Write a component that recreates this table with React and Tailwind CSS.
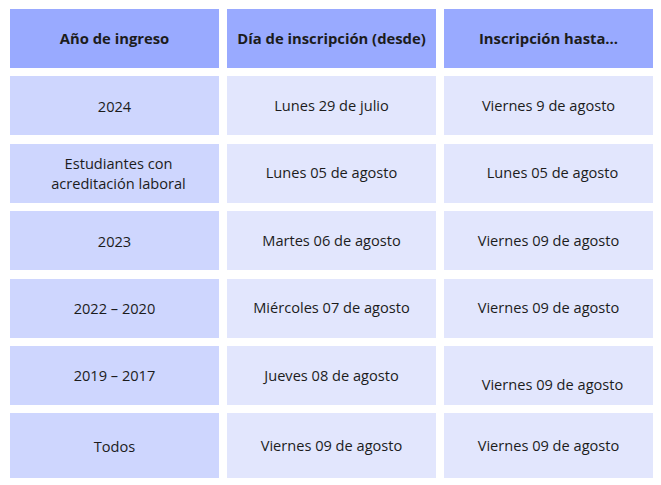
const rows = [
  { a: ['2024'], b: 'Lunes 29 de julio', c: 'Viernes 9 de agosto' },
  { a: ['Estudiantes con', 'acreditación laboral'], b: 'Lunes 05 de agosto', c: 'Lunes 05 de agosto', aShift: 'pl-2', cShift: 'pl-2' },
  { a: ['2023'], b: 'Martes 06 de agosto', c: 'Viernes 09 de agosto' },
  { a: ['2022 – 2020'], b: 'Miércoles 07 de agosto', c: 'Viernes 09 de agosto' },
  { a: ['2019 – 2017'], b: 'Jueves 08 de agosto', c: 'Viernes 09 de agosto', cShift: 'pl-2 pt-[19px]' },
  { a: ['Todos'], b: 'Viernes 09 de agosto', c: 'Viernes 09 de agosto' },
];

export default function App() {
  return (
    <div
      className="w-[661px] h-[485px] bg-white pl-[10px] pt-[9px] text-[#1c1c1c]"
      style={{ fontFamily: '"Open Sans", "Noto Sans", sans-serif' }}
    >
      <div className="grid grid-cols-[209px_209px_209px] gap-x-[8px] gap-y-[8.4px] grid-rows-[59px_59px_59px_59px_59px_59px_65px]">
        {['Año de ingreso', 'Día de inscripción (desde)', 'Inscripción hasta...'].map((h) => (
          <div key={h} className="bg-[#99aaff] flex items-center justify-center text-[14.8px] font-bold">
            {h}
          </div>
        ))}

        {rows.map((r, i) => (
          <Row key={i} r={r} />
        ))}
      </div>
    </div>
  );
}

function Row({ r }) {
  return (
    <>
      <div className={'bg-[#ced6fe] flex flex-col items-center justify-center text-[14.6px] leading-[20px] ' + (r.aShift || '')}>
        {r.a.map((line) => (
          <span key={line}>{line}</span>
        ))}
      </div>
      <div className="bg-[#e2e6fd] flex items-center justify-center text-[14.6px]">{r.b}</div>
      <div className={'bg-[#e2e6fd] flex items-center justify-center text-[14.6px] ' + (r.cShift || '')}>{r.c}</div>
    </>
  );
}
